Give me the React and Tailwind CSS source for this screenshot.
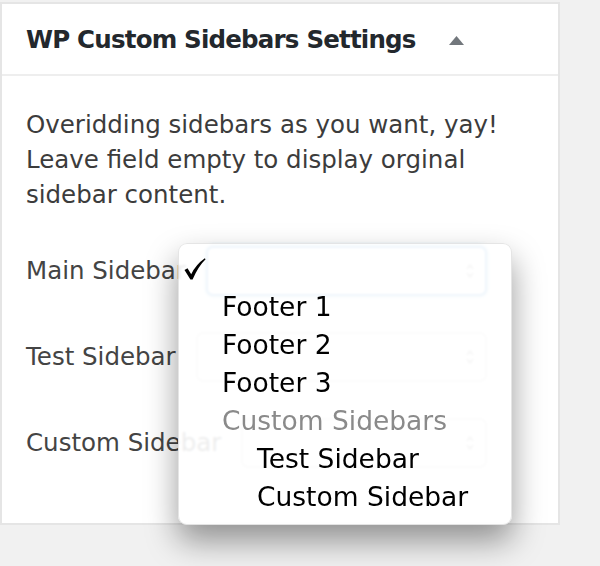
import React from "react";

const SelectArrows = () => (
    <svg width="10" height="18" viewBox="0 0 10 18" className="text-[#9a9a9a]">
        <path d="M2 7 L5 3 L8 7" fill="none" stroke="currentColor" strokeWidth="1.6" />
        <path d="M2 11 L5 15 L8 11" fill="none" stroke="currentColor" strokeWidth="1.6" />
    </svg>
);

const Check = () => (
    <svg width="22" height="22" viewBox="0 0 22 22">
        <path d="M0.5 12 L3.5 10.2 L7.2 16.2 Q12 6.5 20.8 0.3 L21.6 1.2 Q14 8.5 8.6 21.6 L6.4 21.6 Z" fill="#000" />
    </svg>
);

const Row = ({ label, focused }) => (
    <div className="flex items-center h-[52px] mr-[47px]">
        <span className="text-[24.5px] text-[#444] whitespace-nowrap">{label}</span>
        <div
            className={
                focused
                    ? "ml-[20px] flex-1 h-[50px] rounded-[7px] bg-white border-2 border-[#5b9dd9] shadow-[0_0_4px_rgba(30,140,190,0.6)] flex items-center justify-end pr-[10px]"
                    : "ml-[20px] flex-1 h-[50px] rounded-[7px] bg-white border-2 border-[#d6d6d6] flex items-center justify-end pr-[10px]"
            }
        >
            <SelectArrows />
        </div>
    </div>
);

const options = [
    { text: "", checked: true },
    { text: "Footer 1" },
    { text: "Footer 2" },
    { text: "Footer 3" },
    { text: "Custom Sidebars", group: true },
    { text: "Test Sidebar", nested: true },
    { text: "Custom Sidebar", nested: true },
];

export default function App() {
    return (
        <div className="w-[600px] h-[566px] bg-[#f1f1f1] pt-[2px] font-['DejaVu_Sans',sans-serif] overflow-hidden">
            <div className="relative w-[560px] h-[523px] bg-white border-2 border-[#e5e5e5]">
                {/* header */}
                <div className="h-[72px] flex items-center justify-between pl-[24px] pr-[94px] border-b-2 border-[#eeeeee]">
                    <h2 className="text-[24.5px] font-bold text-[#23282d] tracking-[-0.8px] pt-[3px]">
                        WP Custom Sidebars Settings
                    </h2>
                    <svg width="15" height="9" viewBox="0 0 15 9" className="mt-[3px]">
                        <polygon points="7.5,0 15,9 0,9" fill="#72777c" />
                    </svg>
                </div>

                {/* body */}
                <div className="px-[24px] pt-[31px]">
                    <p className="text-[24.5px] leading-[35px] text-[#3c3c3c]">
                        Overidding sidebars as you want, yay!
                        <br />
                        Leave field empty to display orginal
                        <br />
                        sidebar content.
                    </p>
                    <div className="mt-[33px] flex flex-col gap-[34px]">
                        <Row label="Main Sidebar" focused />
                        <Row label="Test Sidebar" />
                        <Row label="Custom Sidebar" />
                    </div>
                </div>

                {/* open select menu */}
                <div className="absolute left-[176px] top-[239px] w-[334px] py-[6px] pb-[8px] rounded-[9px] bg-white/90 backdrop-blur-[1px] border border-black/10 shadow-[0_16px_32px_rgba(0,0,0,0.4)]">
                    {options.map((o, i) => (
                        <div
                            key={i}
                            className={
                                o.checked
                                    ? "h-[38px] flex items-center pl-[5px]"
                                    : o.group
                                    ? "h-[38px] flex items-center pl-[43px] text-[26.5px] text-[#8a8a8a]"
                                    : o.nested
                                    ? "h-[38px] flex items-center pl-[78px] text-[26.5px] text-black"
                                    : "h-[38px] flex items-center pl-[43px] text-[26.5px] text-black"
                            }
                        >
                            {o.checked ? <Check /> : o.text}
                        </div>
                    ))}
                </div>
            </div>
        </div>
    );
}
